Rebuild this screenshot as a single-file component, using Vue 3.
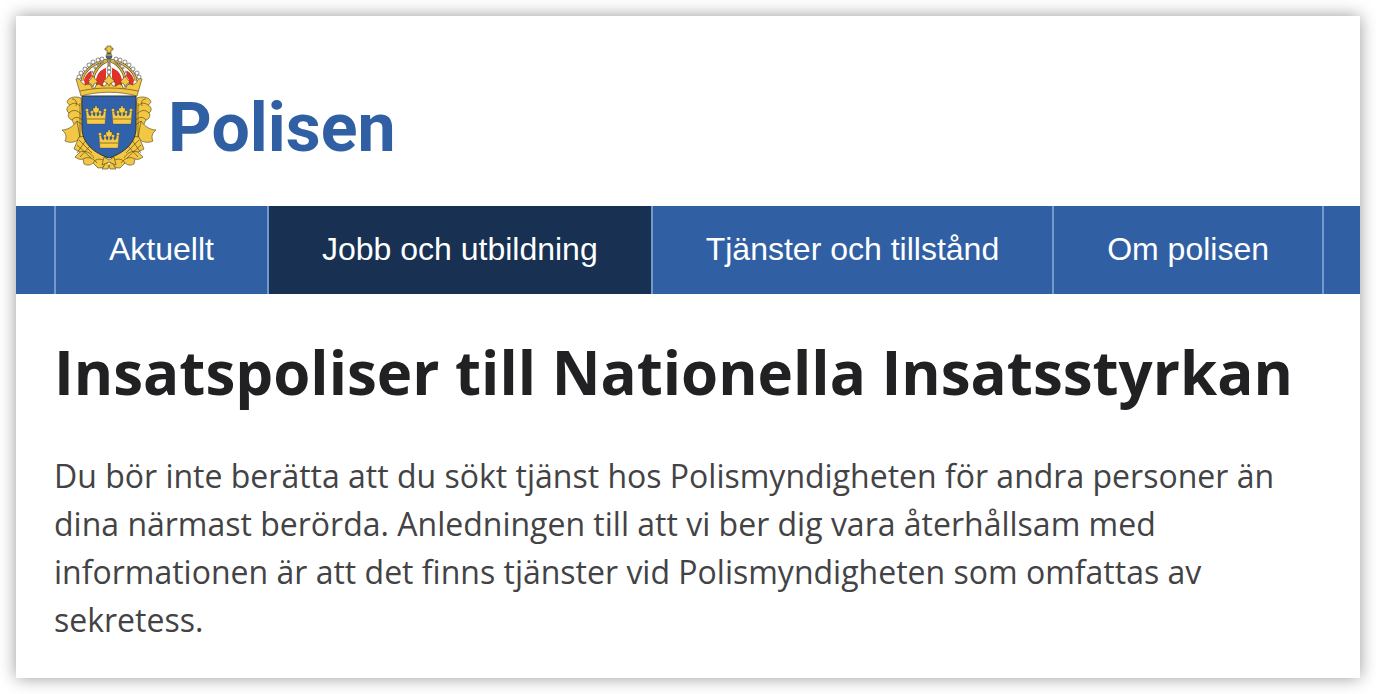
<template>
    <div class="card">
        <header class="header">
            <a class="brand" href="#" aria-label="Polisen">
                <svg class="crest" viewBox="60 44 98 128" aria-hidden="true">
                    <defs>
                        <g id="small-crown">
                            <path d="M-10 -4L-8 -5L-7 0L-5 1L-5 -3L-3 -3L-3 0L-1 1L-1 -3L1 -3L1 1L3 0L3 -3L5 -3L5 1L7 0L8 -5L10 -4L9 9H-9Z" />
                            <path class="crown-line" d="M-9 4H9" />
                            <circle cx="-9" cy="-5" r="1.6" />
                            <circle cx="9" cy="-5" r="1.6" />
                            <circle cx="-4" cy="-3" r="1.6" />
                            <circle cx="4" cy="-3" r="1.6" />
                            <path d="M-1 -9H1V-7H3V-4L1 -2H-1L-3 -4V-7H-1Z" />
                        </g>
                        <!-- left half of the wreath, mirrored for the right half -->
                        <g id="wreath">
                            <path d="M81 98C76 96 70 97 68 100C66 102 68 104 70 105C66 107 66 111 69 113C67 116 69 119 72 120L76 128L84 126Z" />
                            <path d="M70 105C74 102 77 103 80 106M69 113C73 109 77 110 81 114M72 120C75 116 79 117 82 120M72 99C76 99 77 102 76 106" />
                            <path d="M62 130C67 130 73 127 77 121L84 126L86 139L79 139C75 143 69 143 65 141C67 137 66 133 62 130Z" />
                            <path d="M77 121L80 138M80 103V137" />
                            <path d="M79 137L74 149L80 152L75 157C78 159 80 160 83 159L84 164C88 166 91 165 93 163L98 168C103 168 106 166 108 162L105 154L86 136Z" />
                            <path d="M79 140L92 153M77 145L91 158M86 140L77 153M91 145L80 157M80 152C86 150 91 153 94 158M83 159C88 156 93 158 97 163M93 163C96 158 101 158 107 162" />
                        </g>
                        <!-- left half of the crown's lining and arches -->
                        <g id="crown-side">
                            <path class="red" d="M84 80C85 76 88 72 91 71L92 76L89 80L90 88L85 86Z" />
                            <path class="red" d="M96 80C97 74 100 70 106 68V78L103 84L104 88H96Z" />
                            <path class="arch-edge" d="M82 81C83 70 95 62 108 60M93 79C94 71 100 64 107 61" />
                            <path class="arch" d="M82 81C83 70 95 62 108 60M93 79C94 71 100 64 107 61" />
                        </g>
                    </defs>
                    <g class="gold">
                        <use href="#wreath" />
                        <use href="#wreath" transform="translate(218 0) scale(-1 1)" />
                        <path d="M104 157L109 160L114 157L116 165L109 162L102 165Z" />
                        <path d="M105 164L102 169H108L109 165L110 169H116L113 164" />
                    </g>
                    <path class="shield" d="M82 96H136V128C136 143 124 153 109 158C94 153 82 143 82 128Z" />
                    <g class="gold-thin">
                        <use href="#small-crown" x="96" y="115" />
                        <use href="#small-crown" x="122" y="115" />
                        <use href="#small-crown" x="109" y="139" />
                    </g>
                    <use href="#crown-side" />
                    <use href="#crown-side" transform="translate(218 0) scale(-1 1)" />
                    <path class="arch-edge" d="M109 59V82" />
                    <path class="arch" d="M109 59V82" />
                    <g class="gold">
                        <path d="M76 79L79 78L82 83L85 85L88 84L91 85L92 88L95 88L96 85L99 84L102 86L105 86L107 83H111L113 86L116 86L119 84L122 85L123 88L126 88L127 85L130 84L133 85L136 83L139 78L142 79L137 96C119 91 99 91 81 96Z" />
                        <path d="M80 91C98 87 120 87 138 91" />
                        <path d="M93 76L96 80L98 82L94 84L93 87L91 84L88 82L90 80Z" />
                        <path d="M109 75L112 79L115 81L111 83L109 86L107 83L103 81L106 79Z" />
                        <path d="M125 76L128 80L130 82L127 84L125 87L124 84L120 82L122 80Z" />
                        <path d="M107 46H111V48H113V50H111V53H107V50H105V48H107Z" />
                    </g>
                    <circle class="orb" cx="109" cy="56" r="3" />
                    <path class="orb-band" d="M106 55H112" />
                    <g class="pearls">
                        <circle v-for="(p, i) in pearls" :key="i" :cx="p[0]" :cy="p[1]" :r="p[2]" />
                    </g>
                </svg>
                <span class="brand-name">Polisen</span>
            </a>
        </header>

        <nav class="nav" aria-label="Huvudmeny">
            <ul class="nav-list">
                <li v-for="item in menu" :key="item" class="nav-item">
                    <a
                        href="#"
                        class="nav-link"
                        :class="{ active: item === current }"
                        :aria-current="item === current ? 'page' : null"
                    >{{ item }}</a>
                </li>
            </ul>
        </nav>

        <main class="content">
            <h1 class="title">Insatspoliser till Nationella Insatsstyrkan</h1>
            <p class="intro">
                Du bör inte berätta att du sökt tjänst hos Polismyndigheten för andra personer än
                dina närmast berörda. Anledningen till att vi ber dig vara återhållsam med
                informationen är att det finns tjänster vid Polismyndigheten som omfattas av
                sekretess.
            </p>
        </main>
    </div>
</template>

<script setup>
import { ref } from 'vue';

const menu = ['Aktuellt', 'Jobb och utbildning', 'Tjänster och tillstånd', 'Om polisen'];
const current = ref('Jobb och utbildning');

// Pearls on the left arches: x, y, radius
const leftPearls = [
    [79, 77, 2], [81, 73, 2], [85, 69, 2], [89, 65, 2],
    [93, 62, 2], [98, 60, 2], [102, 59, 2],
    [92, 72, 1], [95, 68, 1], [98, 65, 1], [102, 63, 1]
];
const pearls = [
    ...leftPearls,
    ...leftPearls.map(([x, y, r]) => [218 - x, y, r]),
    [109, 61, 1], [109, 64, 1], [109, 68, 2], [109, 72, 2]
];
</script>

<style>
body {
    margin: 0;
    background: #fff;
}
</style>

<style scoped>
.card {
    margin: 16px;
    background: #fff;
    box-shadow: 0 0 16px rgba(0, 0, 0, 0.4);
}

/* Header */
.header {
    display: flex;
    padding: 28px 44px 34px;
}

.brand {
    display: flex;
    align-items: flex-end;
    gap: 10px;
    color: #3060a3;
    text-decoration: none;
}

.crest {
    display: block;
    width: 98px;
    height: 128px;
}

.brand-name {
    font-family: Roboto, sans-serif;
    font-size: 68px;
    font-weight: 700;
    line-height: 88px;
}

.gold {
    fill: #f2c744;
    stroke: #4a3d18;
    stroke-width: 0.6;
    stroke-linejoin: round;
}

.gold-thin {
    fill: #f5cb48;
    stroke: #4a3d18;
    stroke-width: 0.3;
}

.crown-line {
    stroke-width: 0.6;
}

.shield {
    fill: #2f62aa;
    stroke: #3a3320;
    stroke-width: 1;
}

.red {
    fill: #e03228;
}

.arch-edge {
    fill: none;
    stroke: #5c4a1c;
    stroke-width: 2.6;
}

.arch {
    fill: none;
    stroke: #dcb548;
    stroke-width: 1.6;
}

.orb {
    fill: #3f6291;
    stroke: #3a3320;
    stroke-width: 0.6;
}

.orb-band {
    stroke: #f0c33c;
    stroke-width: 1;
}

.pearls {
    fill: #fff;
    stroke: #3c3c3c;
    stroke-width: 0.6;
}

/* Navigation */
.nav {
    background: #3060a3;
}

.nav-list {
    display: flex;
    margin: 0;
    padding: 0 38px;
    list-style: none;
}

.nav-item {
    border-left: 2px solid #7699cb;
}

.nav-item:last-child {
    border-right: 2px solid #7699cb;
}

.nav-link {
    display: block;
    padding: 23px 53px 25px;
    color: #fff;
    font-family: "Liberation Sans", Arial, sans-serif;
    font-size: 32px;
    line-height: 40px;
    text-decoration: none;
    white-space: nowrap;
}

.nav-link.active {
    background: #183153;
}

/* Content */
.content {
    padding: 38px 38px 34px;
    font-family: "Open Sans", sans-serif;
}

.title {
    margin: 0 0 40px;
    color: #212023;
    font-size: 60px;
    font-weight: 700;
    line-height: 80px;
}

.intro {
    margin: 0;
    color: #434345;
    font-size: 32px;
    line-height: 48px;
}
</style>
